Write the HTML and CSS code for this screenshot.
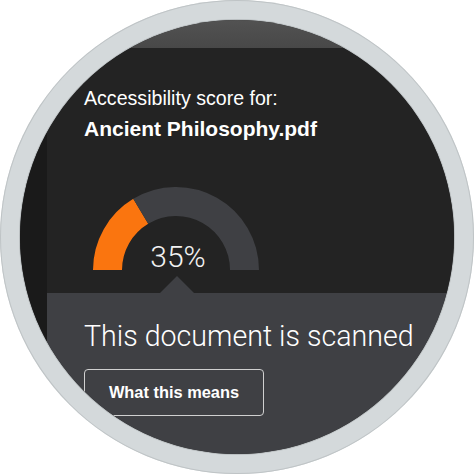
FILE: index.html
```html
<!DOCTYPE html>
<html>
<head>
<meta charset="utf-8">
<link rel="stylesheet" href="styles.css">
</head>
<body>
<div class="frame">
  <div class="screen">
    <div class="header"></div>
    <div class="content">
      <div class="sidebar"></div>
      <div class="main">
        <section class="score">
          <p class="label">Accessibility score for:</p>
          <h1 class="file">Ancient Philosophy.pdf</h1>
          <svg class="gauge" width="168" height="92" viewBox="0 0 168 92">
            <path d="M15.5 84 A68.5 68.5 0 0 1 48.72 25.3" class="arc-fill"/>
            <path d="M48.72 25.3 A68.5 68.5 0 0 1 152.5 84" class="arc-track"/>
            <text x="86" y="81" text-anchor="middle" class="pct">35%</text>
          </svg>
        </section>
        <section class="status">
          <h2 class="status-title">This document is scanned</h2>
          <button class="btn">What this means</button>
        </section>
      </div>
    </div>
  </div>
</div>
</body>
</html>
```
FILE: styles.css
```css
html, body { margin: 0; padding: 0; background: #ffffff; }
.frame {
  width: 474px; height: 474px; box-sizing: border-box;
  padding: 20px; border-radius: 50%;
  background: #d4d9db;
  box-shadow: inset 0 0 0 1px #bfc4c6;
}
.screen {
  width: 434px; height: 434px; border-radius: 50%; overflow: hidden;
  display: grid; grid-template-rows: 28px 1fr;
  background: #232323;
  box-shadow: 0 0 0 1px #b9bec0;
}
.header { background: linear-gradient(#525252, #484848); }
.content { display: grid; grid-template-columns: 27px 1fr; }
.sidebar { background: #1a1a1a; }
.main { display: flex; flex-direction: column; }
.score {
  height: 245px; box-sizing: border-box;
  padding: 39px 0 0 37px; background: #232323;
  overflow: hidden;
}
.label {
  margin: 0; font: 400 19.6px/22.5px "Liberation Sans", Arial, sans-serif;
  color: #ffffff; white-space: nowrap;
}
.file {
  margin: 7px 0 0; font: 700 21px/24px "Liberation Sans", Arial, sans-serif;
  color: #ffffff; white-space: nowrap;
}
.gauge { display: block; margin: 45px 0 0 8px; overflow: visible; }
.arc-fill { fill: none; stroke: #fa750f; stroke-width: 29; }
.arc-track { fill: none; stroke: #3f4044; stroke-width: 29; }
.pct { font-family: Roboto, sans-serif; font-weight: 300; font-size: 30px; fill: #f2f2f2; }
.status {
  flex: 1; position: relative; background: #3f4044;
  padding: 26px 0 0 37px;
}
.status::before {
  content: ""; position: absolute; left: 113px; top: -17px;
  border-left: 17px solid transparent; border-right: 17px solid transparent;
  border-bottom: 17px solid #3f4044;
}
.status-title {
  margin: 0; font: 300 28.6px/34px Roboto, sans-serif;
  color: #ffffff; white-space: nowrap;
}
.btn {
  display: block; margin: 16px 0 0; width: 180px; height: 47px;
  box-sizing: border-box; border: 1px solid #d0d0d0; border-radius: 4px;
  background: transparent; color: #ffffff; padding: 0;
  font: 700 16.4px/1 "Liberation Sans", Arial, sans-serif;
}
```
